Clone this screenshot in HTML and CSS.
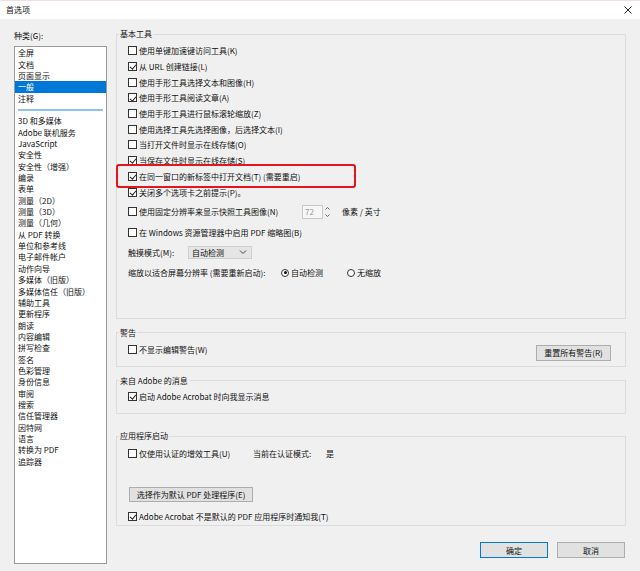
FILE: index.html
```html
<!DOCTYPE html>
<html lang="zh-CN">

<head>
  <meta charset="UTF-8" />
  <meta name="viewport" content="width=device-width, initial-scale=1.0" />
  <title>首选项</title>
  <link rel="stylesheet" href="styles.css">
</head>

<body>
  <div class="dialog">
    <div class="titlebar">
      <span class="title">首选项</span>
      <svg class="close" width="8" height="8" viewBox="0 0 8 8">
        <path d="M0.5 0.5 L7.5 7.5 M7.5 0.5 L0.5 7.5" stroke="#222" stroke-width="1" fill="none" />
      </svg>
    </div>

    <div class="main">
      <!-- category list -->
      <div class="categories">
        <div class="cat-label">种类(G):</div>
        <ul class="cat-list">
          <li>全屏</li>
          <li>文档</li>
          <li>页面显示</li>
          <li class="selected">一般</li>
          <li>注释</li>
          <li class="divider"></li>
          <li>3D 和多媒体</li>
          <li>Adobe 联机服务</li>
          <li>JavaScript</li>
          <li>安全性</li>
          <li>安全性（增强）</li>
          <li>编录</li>
          <li>表单</li>
          <li>测量（2D）</li>
          <li>测量（3D）</li>
          <li>测量（几何）</li>
          <li>从 PDF 转换</li>
          <li>单位和参考线</li>
          <li>电子邮件帐户</li>
          <li>动作向导</li>
          <li>多媒体（旧版）</li>
          <li>多媒体信任（旧版）</li>
          <li>辅助工具</li>
          <li>更新程序</li>
          <li>朗读</li>
          <li>内容编辑</li>
          <li>拼写检查</li>
          <li>签名</li>
          <li>色彩管理</li>
          <li>身份信息</li>
          <li>审阅</li>
          <li>搜索</li>
          <li>信任管理器</li>
          <li>因特网</li>
          <li>语言</li>
          <li>转换为 PDF</li>
          <li>追踪器</li>
        </ul>
      </div>

      <!-- settings panel -->
      <div class="panel">
        <fieldset class="group">
          <legend>基本工具</legend>
          <div class="group-body basic">
            <div class="check"><span class="box"></span>使用单键加速键访问工具(K)</div>
            <div class="check"><span class="box checked"></span>从 URL 创建链接(L)</div>
            <div class="check"><span class="box"></span>使用手形工具选择文本和图像(H)</div>
            <div class="check"><span class="box checked"></span>使用手形工具阅读文章(A)</div>
            <div class="check"><span class="box"></span>使用手形工具进行鼠标滚轮缩放(Z)</div>
            <div class="check"><span class="box"></span>使用选择工具先选择图像，后选择文本(I)</div>
            <div class="check"><span class="box"></span>当打开文件时显示在线存储(O)</div>
            <div class="check"><span class="box checked"></span>当保存文件时显示在线存储(S)</div>
            <div class="check marked"><span class="box checked"></span>在同一窗口的新标签中打开文档(T) (需要重启)</div>
            <div class="check"><span class="box checked"></span>关闭多个选项卡之前提示(P)。</div>

            <div class="wide-row first">
              <div class="check fixed"><span class="box"></span>使用固定分辨率来显示快照工具图像(N)</div>
              <div class="spin">
                <span class="spin-value">72</span>
                <span class="spin-arrows">
                  <svg width="9" height="6" viewBox="0 0 9 6"><path d="M2.5 4 L4.5 2 L6.5 4" stroke="#666" fill="none" /></svg>
                  <svg width="9" height="6" viewBox="0 0 9 6"><path d="M2.5 2 L4.5 4 L6.5 2" stroke="#666" fill="none" /></svg>
                </span>
              </div>
              <span class="unit">像素 / 英寸</span>
            </div>
            <div class="wide-row">
              <div class="check"><span class="box"></span>在 Windows 资源管理器中启用 PDF 缩略图(B)</div>
            </div>
            <div class="wide-row">
              <span class="field-label">触摸模式(M):</span>
              <div class="select">
                <span>自动检测</span>
                <svg width="8" height="6" viewBox="0 0 8 6"><path d="M1 1.5 L4 4.5 L7 1.5" stroke="#444" fill="none" /></svg>
              </div>
            </div>
            <div class="wide-row">
              <span class="scale-label">缩放以适合屏幕分辨率 (需要重新启动):</span>
              <span class="radio on"></span><span class="radio-text">自动检测</span>
              <span class="radio"></span><span class="radio-text">无缩放</span>
            </div>
          </div>
        </fieldset>

        <fieldset class="group warn">
          <legend>警告</legend>
          <div class="group-body split">
            <div class="check"><span class="box"></span>不显示编辑警告(W)</div>
            <button class="btn reset">重置所有警告(R)</button>
          </div>
        </fieldset>

        <fieldset class="group messages">
          <legend>来自 Adobe 的消息</legend>
          <div class="group-body">
            <div class="check"><span class="box checked"></span>启动 Adobe Acrobat 时向我显示消息</div>
          </div>
        </fieldset>

        <fieldset class="group startup">
          <legend>应用程序启动</legend>
          <div class="group-body">
            <div class="cert-row">
              <div class="check cert"><span class="box"></span>仅使用认证的增效工具(U)</div>
              <span class="cert-label">当前在认证模式:</span>
              <span>是</span>
            </div>
            <button class="btn default-pdf">选择作为默认 PDF 处理程序(E)</button>
            <div class="check notify"><span class="box checked"></span>Adobe Acrobat 不是默认的 PDF 应用程序时通知我(T)</div>
          </div>
        </fieldset>

        <div class="actions">
          <button class="btn primary">确定</button>
          <button class="btn">取消</button>
        </div>
      </div>
    </div>
  </div>
</body>

</html>
```

FILE: styles.css
```css
* {
  box-sizing: border-box;
}

body {
  margin: 0;
  font-family: "Noto Sans CJK SC", "Microsoft YaHei", sans-serif;
  font-size: 8px;
  color: #111;
  background: #f0f0f0;
}

.dialog {
  width: 640px;
  height: 571px;
  background: #f0f0f0;
  overflow: hidden;
}

.titlebar {
  height: 19px;
  background: #fff;
  border-top: 1px solid #f3dde1;
  display: flex;
  align-items: center;
  justify-content: space-between;
  padding: 0 6px 0 6px;
}

.title {
  line-height: 12px;
}

.close {
  display: block;
  margin-right: 2px;
}

.main {
  display: flex;
  padding: 0 14px;
  gap: 9px;
}

/* left side */
.categories {
  width: 93px;
  padding-top: 11px;
}

.cat-label {
  line-height: 12px;
  height: 12px;
  margin-bottom: 4px;
}

.cat-list {
  list-style: none;
  margin: 0;
  padding: 0.3px 0 0 0;
  height: 518px;
  background: #fff;
  border: 1px solid #9a9a9a;
}

.cat-list li {
  height: 11.35px;
  line-height: 11.35px;
  padding-left: 3px;
  white-space: nowrap;
}

.cat-list li.selected {
  background: #0078d7;
  color: #fff;
}

.cat-list li.divider {
  display: flex;
  align-items: center;
  padding: 0 3px;
}

.cat-list li.divider::after {
  content: "";
  flex: 1;
  height: 2px;
  background: #8ec3ee;
}

/* right side */
.panel {
  width: 510px;
  padding-top: 9px;
}

.group {
  margin: 0;
  padding: 0;
  min-width: 0;
  border: 1px solid #dcdcdc;
}

.group legend {
  margin-left: 2px;
  padding: 0 1px;
  line-height: 12px;
  font-size: 8px;
}

.group-body {
  padding: 3px 14px 0 11px;
}

.basic {
  padding-bottom: 35px;
}

.check {
  position: relative;
  display: flex;
  align-items: center;
  height: 15.7px;
  white-space: nowrap;
}

.box {
  position: relative;
  width: 9px;
  height: 9px;
  margin-right: 2px;
  background: #fff;
  border: 1px solid #333;
  flex-shrink: 0;
}

.box.checked::after {
  content: "";
  position: absolute;
  left: 2.2px;
  top: 0.2px;
  width: 2.6px;
  height: 5px;
  border: solid #222;
  border-width: 0 1px 1px 0;
  transform: rotate(40deg);
}

/* red highlight drawn around one option */
.marked::after {
  content: "";
  position: absolute;
  left: -12px;
  top: -4.75px;
  width: 236px;
  height: 20px;
  border: 2px solid #e3151d;
  border-radius: 3px;
}

.wide-row {
  display: flex;
  align-items: center;
  height: 20.3px;
  white-space: nowrap;
}

.wide-row.first {
  margin-top: 1.7px;
}

.check.fixed {
  width: 174px;
}

.spin {
  display: flex;
  height: 14px;
}

.spin-value {
  width: 21px;
  height: 14px;
  line-height: 12px;
  padding-left: 2px;
  color: #9a9a9a;
  background: #f7f7f7;
  border: 1px solid #c8c8c8;
}

.spin-arrows {
  display: flex;
  flex-direction: column;
  width: 10px;
  height: 14px;
  background: #f0f0f0;
}

.spin-arrows svg {
  display: block;
  height: 7px;
}

.unit {
  margin-left: 9px;
}

.field-label {
  width: 60px;
}

.select {
  display: flex;
  align-items: center;
  justify-content: space-between;
  width: 64px;
  height: 13px;
  padding: 0 4px 0 3px;
  background: #e5e5e5;
  border: 1px solid #d0d0d0;
}

.scale-label {
  width: 153px;
}

.radio {
  position: relative;
  width: 8px;
  height: 8px;
  margin-right: 2px;
  border: 1px solid #333;
  border-radius: 50%;
  background: #fff;
}

.radio.on::after {
  content: "";
  position: absolute;
  left: 1.5px;
  top: 1.5px;
  width: 3px;
  height: 3px;
  border-radius: 50%;
  background: #111;
}

.radio-text {
  width: 56px;
}

.btn {
  display: flex;
  align-items: center;
  justify-content: center;
  height: 16px;
  padding: 0;
  font-family: inherit;
  font-size: 8px;
  color: #111;
  background: #e1e1e1;
  border: 1px solid #adadad;
  border-radius: 0;
}

.warn {
  margin-top: 8px;
}

.split {
  display: flex;
  justify-content: space-between;
  align-items: flex-start;
  padding-bottom: 5px;
}

.reset {
  width: 75px;
  margin-top: 3px;
}

.messages {
  margin-top: 8px;
}

.messages .group-body {
  padding-top: 2px;
  padding-bottom: 9px;
}

.startup {
  margin-top: 16px;
}

.startup .group-body {
  padding-bottom: 1.3px;
}

.cert-row {
  display: flex;
  align-items: center;
  height: 15.7px;
}

.check.cert {
  width: 125px;
}

.cert-label {
  width: 73px;
}

.default-pdf {
  width: 124px;
  height: 15px;
  margin: 26.3px 0 0 1px;
}

.notify {
  margin-top: 6px;
}

.actions {
  display: flex;
  justify-content: flex-end;
  gap: 9px;
  margin-top: 16px;
  padding-right: 1px;
}

.actions .btn {
  width: 68px;
}

.btn.primary {
  border-color: #0078d7;
}
```
